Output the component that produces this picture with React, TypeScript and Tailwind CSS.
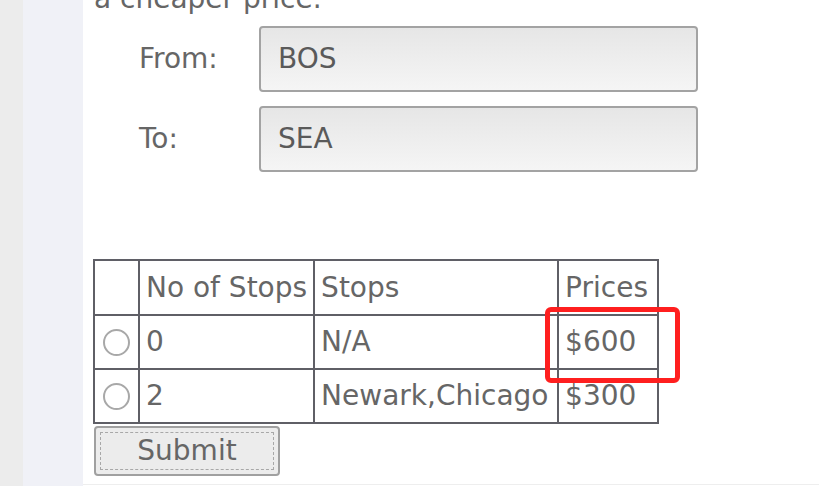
import React from "react";

export default function App() {
  const font = { fontFamily: '"DejaVu Sans", "Liberation Sans", sans-serif' };
  const cell = "border-2 border-[#5f5f66] px-[6px] whitespace-nowrap";
  return (
    <div className="flex h-[486px] w-[819px] overflow-hidden bg-white" style={font}>
      <div className="w-[23px] shrink-0 bg-[#ececec]" />
      <div className="w-[60px] shrink-0 bg-[#f0f1f7]" />
      <div className="relative flex-1 bg-white">
        <div className="flex h-[485px] flex-col items-start border-b border-[#eeeeee] pl-[11px] text-[28px] leading-[34px] text-[#666666]">
          <div className="mt-[-18px] whitespace-nowrap">a cheaper price.</div>
          <div className="mt-[10px] flex flex-col gap-[14px] pl-[45px]">
            <div className="flex items-center">
              <span className="w-[120px]">From:</span>
              <div className="flex h-[66px] w-[439px] items-center rounded-[4px] border-2 border-[#a3a3a3] bg-gradient-to-b from-[#e6e6e6] to-[#f5f5f5] pl-[17px] text-[#5a5a5a]">
                BOS
              </div>
            </div>
            <div className="flex items-center">
              <span className="w-[120px]">To:</span>
              <div className="flex h-[66px] w-[439px] items-center rounded-[4px] border-2 border-[#a3a3a3] bg-gradient-to-b from-[#e6e6e6] to-[#f5f5f5] pl-[17px] text-[#5a5a5a]">
                SEA
              </div>
            </div>
          </div>
          <table className="mt-[87px] ml-[-1px] border-collapse">
            <tbody>
              <tr className="h-[55px]">
                <td className="w-[45px] border-2 border-[#5f5f66]" />
                <td className={cell}>No of Stops</td>
                <td className={`${cell} w-[244px]`}>Stops</td>
                <td className={`${cell} w-[100px]`}>Prices</td>
              </tr>
              <tr className="h-[54px]">
                <td className="border-2 border-[#5f5f66] pl-[8px]">
                  <div className="h-[27px] w-[27px] rounded-full border-2 border-[#a8a8a8] bg-white" />
                </td>
                <td className={cell}>0</td>
                <td className={cell}>N/A</td>
                <td className={cell}>$600</td>
              </tr>
              <tr className="h-[54px]">
                <td className="border-2 border-[#5f5f66] pl-[8px]">
                  <div className="h-[27px] w-[27px] rounded-full border-2 border-[#a8a8a8] bg-white" />
                </td>
                <td className={cell}>2</td>
                <td className={cell}>Newark,Chicago</td>
                <td className={cell}>$300</td>
              </tr>
            </tbody>
          </table>
          <div className="mt-[2px] flex h-[50px] w-[186px] rounded-[4px] border-2 border-[#a0a0a0] bg-[#ececec] p-[4px]">
            <div className="flex flex-1 items-center justify-center border border-dashed border-[#a8a8a8] text-[#666666]">
              Submit
            </div>
          </div>
        </div>
        <div className="absolute left-[462px] top-[307px] h-[76px] w-[135px] rounded-[6px] border-[5px] border-[#ff1f1f]" />
      </div>
    </div>
  );
}
